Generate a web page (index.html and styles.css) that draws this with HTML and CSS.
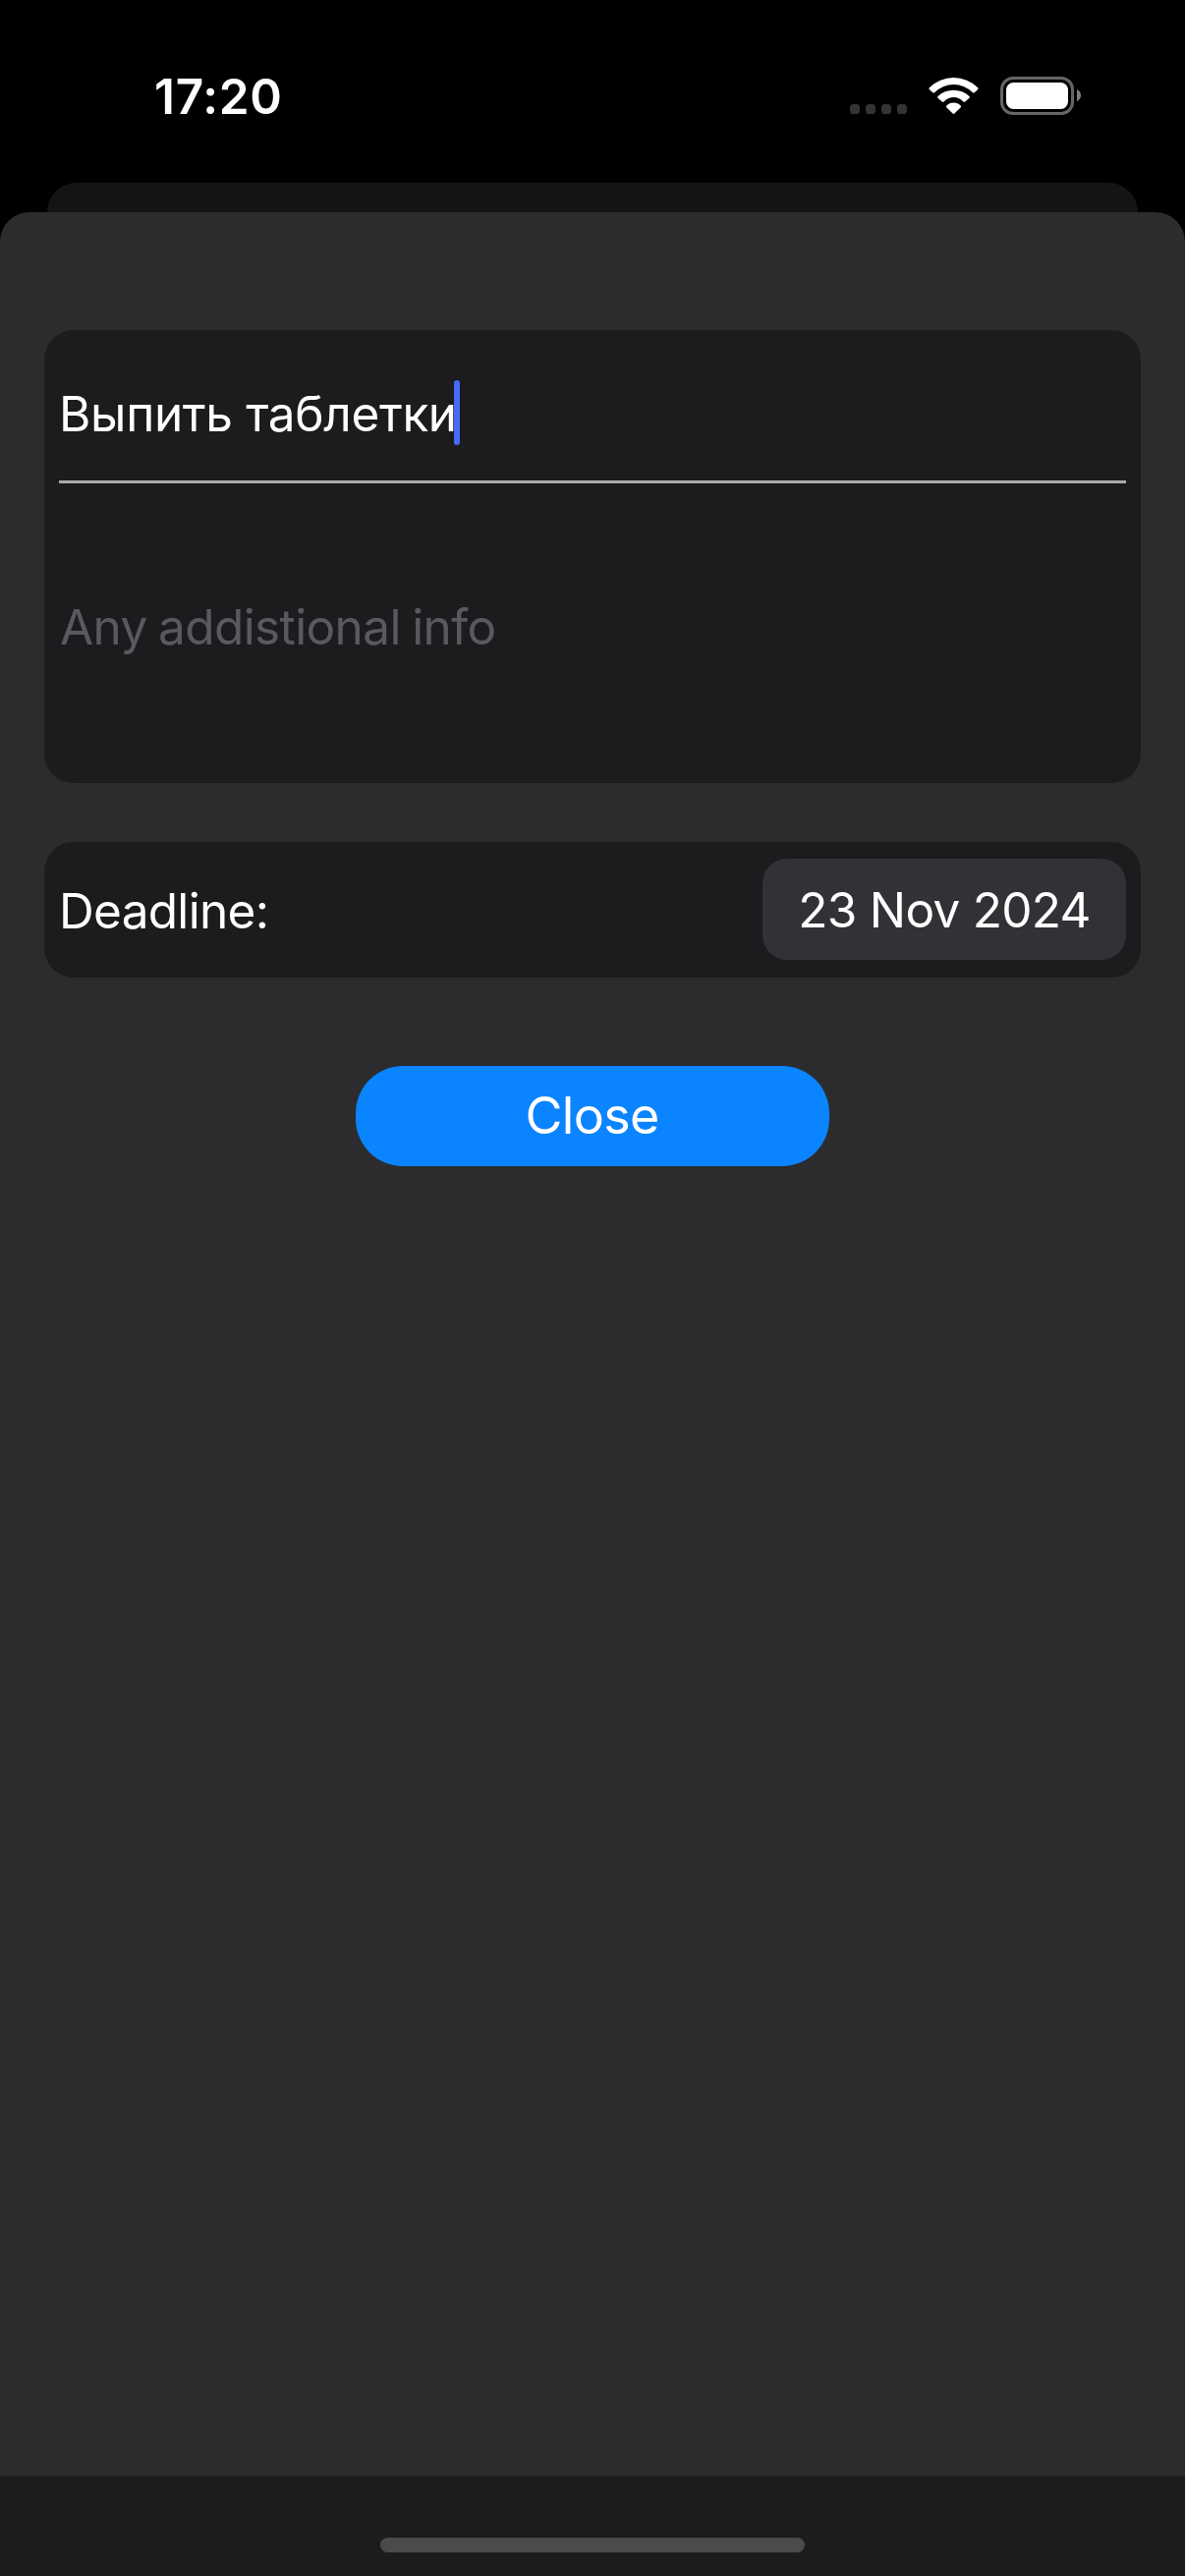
FILE: index.html
```html
<!DOCTYPE html>
<html lang="en">
<head>
<meta charset="utf-8">
<title>Reminder</title>
<link rel="stylesheet" href="styles.css">
</head>
<body>
<div class="screen">
  <header class="status">
    <span class="time">17:20</span>
    <svg class="status-icons" width="240" height="44" viewBox="862 76 240 44" aria-hidden="true">
      <g fill="#343434">
        <rect x="865" y="106" width="10" height="10" rx="3.6"/>
        <rect x="881" y="106" width="10" height="10" rx="3.6"/>
        <rect x="897" y="106" width="10" height="10" rx="3.6"/>
        <rect x="913" y="106" width="10" height="10" rx="3.6"/>
      </g>
      <g fill="#fff">
        <path d="M945.8 89.2 A35 35 0 0 1 995.2 89.2 Q996 90 995.2 90.9 L991.7 94.2 Q990.8 95 990 94.2 A27.3 27.3 0 0 0 951 94.2 Q950.2 95 949.3 94.2 L945.8 90.9 Q945 90 945.8 89.2Z"/>
        <path d="M954.5 98 A23.5 23.5 0 0 1 986.5 98 Q987.3 98.9 986.5 99.7 L982.3 103.4 Q981.3 104.2 980.4 103.4 A13.5 13.5 0 0 0 960.6 103.4 Q959.7 104.2 958.7 103.4 L954.5 99.7 Q953.7 98.900 954.5 98Z"/>
        <path d="M963.2 107.700 A10 10 0 0 1 977.8 107.700 Q978.6 108.500 977.8 109.200 L971.4 115.500 Q970.5 116.300 969.6 115.500 L963.2 109.200 Q962.4 108.500 963.2 107.700Z"/>
      </g>
      <rect x="1019.5" y="79.500" width="72" height="36" rx="11.500" fill="none" stroke="#666" stroke-width="3"/>
      <rect x="1024" y="84" width="63" height="27" rx="7.500" fill="#fff"/>
      <path d="M1096 91 Q1100 93 1100 97 Q1100 101 1096 103Z" fill="#808080"/>
    </svg>
  </header>
  <div class="back-sheet"></div>
  <main class="sheet">
    <section class="card">
      <div class="title-field"><span class="title">Выпить таблетки</span><span class="caret"></span></div>
      <div class="note-field">Any addistional info</div>
    </section>
    <section class="card deadline">
      <span class="deadline-label">Deadline:</span>
      <button class="date">23 Nov 2024</button>
    </section>
    <button class="close">Close</button>
  </main>
  <footer class="bottom"><div class="home-indicator"></div></footer>
</div>
</body>
</html>
```
FILE: styles.css
```css
* { box-sizing: border-box; }
body {
  margin: 0;
  background: #000;
  font-family: Inter, "Noto Sans", sans-serif;
  font-size: 49.5px;
  letter-spacing: -0.7px;
  color: #fff;
}
button { border: 0; padding: 0; font: inherit; letter-spacing: inherit; color: inherit; }
.screen { width: 1206px; height: 2622px; display: flex; flex-direction: column; overflow: hidden; }
.status {
  height: 186px;
  flex: none;
  display: flex;
  justify-content: space-between;
  align-items: flex-start;
  padding: 76px 104px 0 157px;
}
.time { font-weight: 600; line-height: 44px; letter-spacing: 0.7px; }
.back-sheet { flex: none; height: 30px; margin: 0 48px; background: #141414; border-radius: 30px 30px 0 0; }
.sheet {
  flex: 1;
  display: flex;
  flex-direction: column;
  padding: 120px 45px 0;
  background: #2c2c2e;
  border-radius: 30px 30px 0 0;
}
.card { flex: none; height: 461px; padding: 0 15px; background: #1c1c1e; border-radius: 30px; }
.title-field {
  height: 156px;
  padding-top: 17px;
  display: flex;
  align-items: center;
  border-bottom: 3px solid #aaa;
  white-space: nowrap;
}
.title { letter-spacing: -0.35px; }
.caret { width: 6px; height: 66px; margin: 0 0 2px -3px; border-radius: 3px; background: #446cf7; }
.note-field {
  height: 292px;
  padding-left: 1px;
  display: flex;
  align-items: center;
  color: #5a5a5e;
  letter-spacing: -0.6px;
  word-spacing: -2px;
}
.deadline {
  height: 138px;
  margin-top: 60px;
  display: flex;
  align-items: center;
  justify-content: space-between;
}
.deadline-label { padding-top: 1px; }
.date { width: 370px; height: 103px; margin-bottom: 1px; border-radius: 25px; background: #323236; }
.close {
  width: 482px;
  height: 102px;
  flex: none;
  margin: 90px auto 0;
  padding: 0 1px 1px 0;
  border-radius: 48px;
  background: #0b84ff;
  font-size: 52px;
}
.bottom { height: 102px; flex: none; padding-top: 63px; background: #1c1c1e; }
.home-indicator { width: 432px; height: 15px; margin: 0 auto; border-radius: 8px; background: #4b4b4b; }
```
